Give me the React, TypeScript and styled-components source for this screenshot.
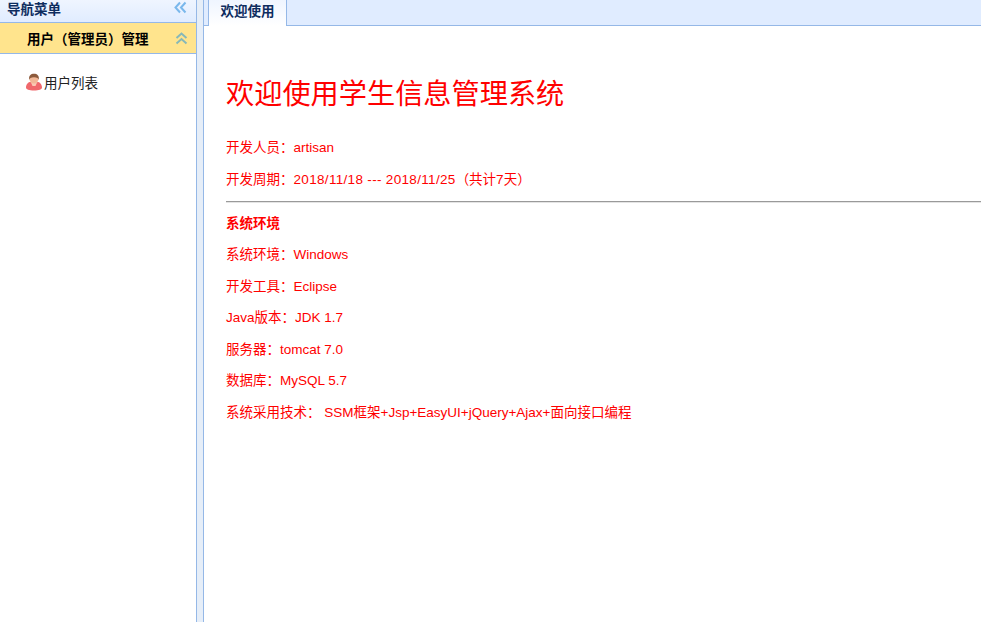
import React from "react";
import styled, { createGlobalStyle } from "styled-components";

const GlobalStyle = createGlobalStyle`
  html, body {
    margin: 0;
    padding: 0;
    height: 100%;
    overflow: hidden;
    background: #fff;
    font-family: "Liberation Sans", "Noto Sans CJK SC", sans-serif;
    text-spacing-trim: space-all;
  }
`;

const Layout = styled.div`
  display: flex;
  width: 100vw;
  height: 100vh;
`;

const Sidebar = styled.aside`
  width: 196px;
  flex: none;
  display: flex;
  flex-direction: column;
  border-right: 1px solid #95b8e7;
`;

const PanelTitle = styled.div`
  height: 23px;
  flex: none;
  display: flex;
  align-items: center;
  justify-content: space-between;
  padding: 0 9px 7px 7px;
  box-sizing: border-box;
  background: linear-gradient(to bottom, #eff5ff, #e0ecff);
  border-bottom: 1px solid #95b8e7;
  color: #0e2d5f;
  font-size: 13.5px;
  font-weight: bold;
`;

const AccordionHeader = styled.div`
  height: 31px;
  flex: none;
  display: flex;
  align-items: center;
  justify-content: space-between;
  box-sizing: border-box;
  padding: 0 8px 0 27px;
  background: #ffe48d;
  border-bottom: 1px solid #95b8e7;
  color: #000;
  font-size: 13.5px;
  font-weight: bold;
`;

const NavList = styled.ul`
  list-style: none;
  margin: 0;
  padding: 18px 0 0 25px;
`;

const NavItem = styled.li`
  display: flex;
  align-items: center;
  height: 20px;
  color: #222;
  font-size: 13.5px;
`;

const Splitter = styled.div`
  width: 6px;
  flex: none;
  background: #e6eef8;
`;

const Main = styled.main`
  flex: 1;
  min-width: 0;
  display: flex;
  flex-direction: column;
  border-left: 1px solid #95b8e7;
`;

const TabBar = styled.div`
  height: 26px;
  flex: none;
  box-sizing: border-box;
  display: flex;
  padding-left: 4px;
  background: #e0ecff;
  border-bottom: 1px solid #95b8e7;
`;

const Tab = styled.div`
  width: 79px;
  height: 26px;
  box-sizing: border-box;
  text-align: center;
  line-height: 23px;
  font-size: 13.5px;
  font-weight: bold;
  color: #0e2d5f;
  background: linear-gradient(to bottom, #eff5ff, #fff);
  border-left: 1px solid #95b8e7;
  border-right: 1px solid #95b8e7;
`;

const Content = styled.section`
  padding: 48px 0 0 22px;
  color: #f00;
  font-size: 13.5px;
  line-height: 20px;
`;

const Title = styled.h1`
  margin: 0 0 24px;
  font-size: 28.2px;
  font-weight: normal;
  line-height: 40px;
`;

const Line = styled.p<{ $bold?: boolean }>`
  margin: 0 0 11.5px;
  font-weight: ${(p) => (p.$bold ? "bold" : "normal")};
`;

const Dates = styled.span`
  letter-spacing: 0.32px;
`;

const Rule = styled.hr`
  margin: 3px 0 10.5px;
  border: 0;
  border-top: 1px solid #9a9a9a;
  border-bottom: 1px solid #e4e4e4;
`;

const Chevrons: React.FC<{ dir: "left" | "up"; color: string }> = ({ dir, color }) => (
  <svg width="13" height="13" viewBox="0 0 13 13" fill="none" stroke={color} strokeWidth="2">
    {dir === "left" ? (
      <>
        <path d="M6 1.500 1.500 6.500 6 11.500" />
        <path d="M11.500 1.500 7 6.500 11.500 11.500" />
      </>
    ) : (
      <>
        <path d="M1.500 6 6.500 1.500 11.500 6" />
        <path d="M1.500 11.500 6.500 7 11.500 11.500" />
      </>
    )}
  </svg>
);

const UserIcon = () => (
  <svg width="18" height="18" viewBox="0 0 18 18" style={{ flex: "none", marginRight: 1 }}>
    <path d="M1 14.500c0-3.500 2.500-5.500 4.500-5.500 1 1.500 6 1.500 7 0 2 0 4.500 2 4.500 5.500 0 2-3 3-8 3s-8-1-8-3z" fill="#f0686c" />
    <path d="M6 9.500h6L10.500 13h-3z" fill="#fbc9b5" />
    <ellipse cx="9" cy="6" rx="4.500" ry="4.500" fill="#f2b898" />
    <path d="M4.200 7C3.500 2.500 6 .8 9 .8s5.500 1.700 4.800 6.200c-.4-1.800-1.800-2.800-4.800-2.800S4.600 5.200 4.200 7z" fill="#8c5a3c" />
  </svg>
);

export default function App() {
  return (
    <Layout>
      <GlobalStyle />
      <Sidebar>
        <PanelTitle>
          <span>导航菜单</span>
          <Chevrons dir="left" color="#7ab8ec" />
        </PanelTitle>
        <AccordionHeader>
          <span>用户（管理员）管理</span>
          <Chevrons dir="up" color="#86b8b8" />
        </AccordionHeader>
        <NavList>
          <NavItem>
            <UserIcon />
            用户列表
          </NavItem>
        </NavList>
      </Sidebar>
      <Splitter />
      <Main>
        <TabBar>
          <Tab>欢迎使用</Tab>
        </TabBar>
        <Content>
          <Title>欢迎使用学生信息管理系统</Title>
          <Line>开发人员：artisan</Line>
          <Line>
            开发周期：<Dates>2018/11/18 --- 2018/11/25</Dates>（共计7天）
          </Line>
          <Rule />
          <Line $bold>系统环境</Line>
          <Line>系统环境：Windows</Line>
          <Line>开发工具：Eclipse</Line>
          <Line>Java版本：JDK 1.7</Line>
          <Line>服务器：tomcat 7.0</Line>
          <Line>数据库：MySQL 5.7</Line>
          <Line>系统采用技术：&nbsp;SSM框架+Jsp+EasyUI+jQuery+Ajax+面向接口编程</Line>
        </Content>
      </Main>
    </Layout>
  );
}
